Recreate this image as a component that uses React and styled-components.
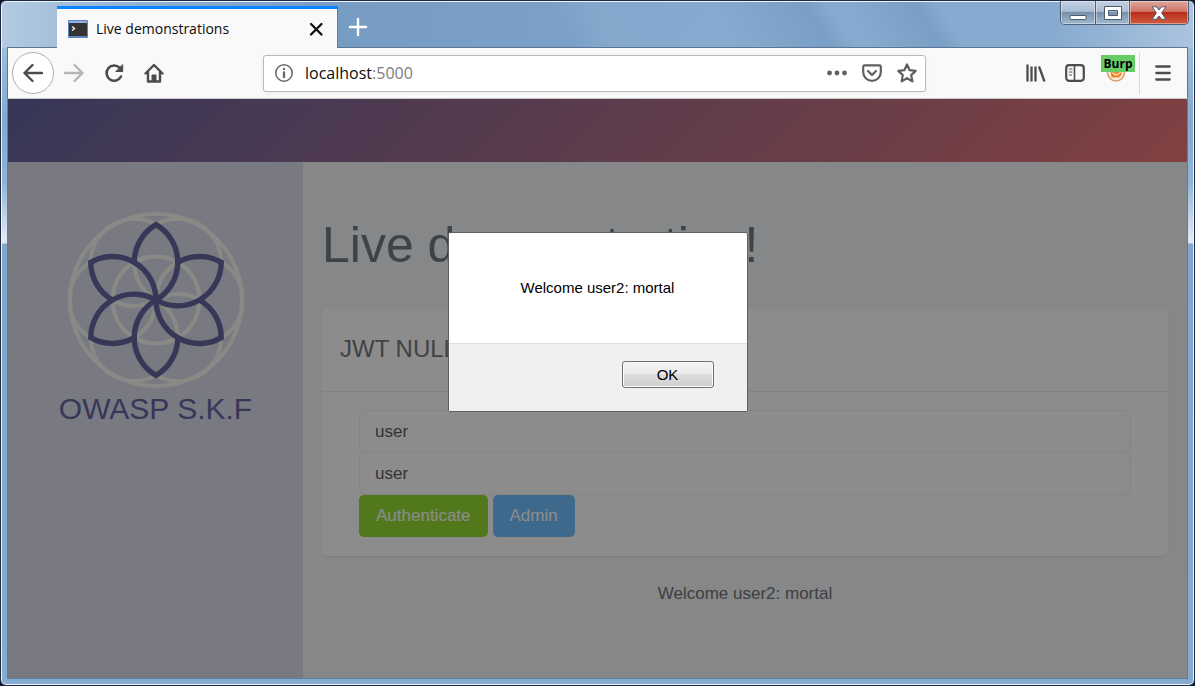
import React from 'react';
import styled, { createGlobalStyle, css } from 'styled-components';

const GlobalStyle = createGlobalStyle`
  *, *::before, *::after { box-sizing: border-box; }
  body { margin: 0; background: #10182b; font-family: "Liberation Sans", Arial, sans-serif; }
  h1, h2, p { margin: 0; font-weight: 400; }
  button, input { font-family: inherit; }
`;

const uiFont = css`font-family: "Open Sans", "Segoe UI", sans-serif;`;

const Window = styled.div`
  display: flex;
  flex-direction: column;
  min-height: 100vh;
  padding: 0 6px 6px;
  border: 1px solid #1d2940;
  border-radius: 6px;
  box-shadow: inset 0 0 0 1px #eef5fc;
  background:
    linear-gradient(58deg, transparent 47%, rgba(255, 255, 255, 0.06) 50%, transparent 60%, rgba(50, 90, 130, 0.14) 68%, transparent 70%, transparent 71%, rgba(50, 90, 130, 0.14) 77%, transparent 79%) 0 0 / 100% 47px no-repeat,
    linear-gradient(90deg, #b4cae2 0, #8fb0d3 12%, #769cc3 28%, #7ba1c8 48%, #86aad0 60%, #86aad0 88%, #abc4de 100%) 0 0 / 100% 47px no-repeat,
    linear-gradient(180deg, #b0c8e1 0, #83a9d0 120px, #8fb3d8 180px, #e0e9f3 238px, #e0e9f3 242px, #80a6cd 243px, #86abd1 100%);
`;

const TitleBar = styled.header`
  display: flex;
  align-items: flex-end;
  height: 46px;
  padding-left: 50px;
`;

const Tab = styled.div`
  display: flex;
  align-items: center;
  width: 281px;
  height: 42px;
  margin-bottom: -1px;
  padding: 0 11px;
  gap: 8px;
  border-top: 3px solid #0a84ff;
  border-right: 1px solid #5f7fa3;
  background: #f9f9fa;
  color: #0c0c0d;
  font-size: 14px;
  z-index: 1;
  ${uiFont}
  span { flex: 1; white-space: nowrap; }
`;

const PlainButton = styled.button`
  display: grid;
  place-items: center;
  flex: none;
  width: ${p => p.$w || 20}px;
  height: ${p => p.$h || 20}px;
  padding: 0;
  border: 0;
  background: none;
  color: ${p => p.$color || '#4c4c4f'};
`;

const WindowControls = styled.div`
  display: flex;
  align-self: flex-start;
  height: 24px;
  margin-left: auto;
  margin-right: -1px;
  border: 1px solid #4e5f78;
  border-top: 0;
  border-radius: 0 0 5px 5px;
  overflow: hidden;
`;

const ControlButton = styled.button`
  display: grid;
  place-items: center;
  width: ${p => (p.$close ? 59 : 34)}px;
  padding: 0;
  border: 0;
  border-left: ${p => (p.$first ? 0 : '1px solid #4e5f78')};
  box-shadow: inset 0 0 0 1px rgba(255, 255, 255, 0.4);
  background: ${p => p.$close
    ? 'linear-gradient(#e0a79f 0, #cf7567 45%, #b8301c 50%, #cf5a3e 100%)'
    : 'linear-gradient(#c3d2e2 0, #a9bdd3 45%, #7890ab 50%, #a0b8d0 100%)'};
`;

const Toolbar = styled.nav`
  display: flex;
  align-items: center;
  height: 52px;
  padding: 0 14px 0 4px;
  border: 1px solid #5b7593;
  border-bottom-color: #c8c8ca;
  background: #f9f9fa;
`;

const BackButton = styled(PlainButton)`
  border: 1px solid #b1b1b3;
  border-radius: 50%;
  background: #fff;
`;

const NavButtons = styled.div`
  display: flex;
  align-items: center;
  gap: 20px;
  margin-left: 10px;
`;

const AddressBar = styled.div`
  display: flex;
  align-items: center;
  flex: 0 1 663px;
  height: 37px;
  margin-left: 99px;
  padding: 0 8px 0 10px;
  gap: 11px;
  border: 1px solid #b9b9bb;
  border-radius: 3px;
  background: #fff;
  box-shadow: 0 1px 4px rgba(0, 0, 0, 0.06);
`;

const Address = styled.span`
  flex: 1;
  color: #7c7c7f;
  font-size: 16px;
  ${uiFont}
  b { color: #0c0c0d; font-weight: 400; }
`;

const AddressActions = styled.div`
  display: flex;
  gap: 15px;
`;

const ToolbarEnd = styled.div`
  display: flex;
  align-items: center;
  gap: 19px;
  margin-left: auto;
`;

const Extension = styled(PlainButton)`
  position: relative;
  margin-left: -2px;
  span {
    position: absolute;
    top: -8px;
    left: -1px;
    width: 34px;
    height: 17px;
    background: #66cc66;
    color: #000;
    font-size: 12px;
    font-weight: 700;
    line-height: 17px;
    text-align: center;
    ${uiFont}
  }
`;

const MenuSlot = styled.div`
  display: flex;
  align-items: center;
  height: 42px;
  margin-left: -10px;
  padding-left: 13px;
  border-left: 1px solid #dadadc;
`;

const Viewport = styled.div`
  position: relative;
  display: flex;
  flex-direction: column;
  flex: 1;
  border: 1px solid #5f7d9d;
  border-top: 0;
  background: #f3f5f6;
`;

const Banner = styled.div`
  height: 63px;
  background: linear-gradient(135deg, #545496 0%, #e86868 100%);
`;

const Columns = styled.div`
  display: flex;
  flex: 1;
`;

const Sidebar = styled.aside`
  display: flex;
  flex-direction: column;
  align-items: center;
  flex: 0 0 295px;
  padding-top: 50px;
  background: #d8d8ea;
  color: #545496;
  font-size: 30px;
  line-height: 42px;
`;

const Main = styled.main`
  flex: 1;
  padding: 48px 19px 0;
  color: #646c70;
`;

const Title = styled.h1`
  font-size: 50px;
  line-height: 70px;
`;

const Card = styled.section`
  margin-top: 29px;
  border-radius: 6px;
  background: #fff;
  box-shadow: 0 1px 1px rgba(0, 0, 0, 0.08);
`;

const CardTitle = styled.h2`
  height: 83px;
  padding: 0 18px;
  border-bottom: 1px solid #e6eaee;
  font-size: 24px;
  line-height: 80px;
`;

const LoginForm = styled.form`
  display: flex;
  flex-direction: column;
  padding: 18px 37px 19px;
`;

const Field = styled.input`
  width: 100%;
  height: 43px;
  padding: 0 15px;
  border: 1px solid #eceeef;
  border-radius: 6px;
  background: #fff;
  color: #4c4c4e;
  font-size: 17px;
  & + & { margin-top: -1px; }
`;

const Actions = styled.div`
  display: flex;
  gap: 5px;
`;

const ActionButton = styled.button`
  height: 42px;
  padding: 0 17px;
  border: 0;
  border-radius: 5px;
  background: ${p => p.$color};
  color: #fff;
  font-size: 17px;
`;

const Result = styled.p`
  margin-top: 26px;
  color: #646468;
  font-size: 17px;
  line-height: 24px;
  text-align: center;
`;

const Backdrop = styled.div`
  position: absolute;
  inset: 0;
  display: flex;
  align-items: flex-start;
  justify-content: center;
  padding-top: 133px;
  background: rgba(26, 26, 26, 0.5);
`;

const Dialog = styled.div`
  width: 300px;
  border: 1px solid #606060;
  border-radius: 2px;
  overflow: hidden;
  background: #fff;
  color: #000;
  font-size: 15px;
`;

const Message = styled.p`
  padding: 45px 0;
  line-height: 20px;
  text-align: center;
`;

const DialogFooter = styled.div`
  display: flex;
  justify-content: flex-end;
  padding: 17px 33px 23px;
  border-top: 1px solid #dfdfdf;
  background: #f0f0f0;
`;

const OkButton = styled.button`
  width: 92px;
  height: 27px;
  padding: 0;
  border: 1px solid #707070;
  border-radius: 3px;
  background: linear-gradient(#f2f2f2 0, #ebebeb 48%, #dddddd 50%, #cfcfcf 100%);
  box-shadow: inset 0 0 0 1px #fafafa;
  color: #000;
  font-size: 15px;
`;

const Stroke = ({ size = 20, width = 2, children, ...rest }) => (
  <svg width={size} height={size} viewBox="0 0 20 20" fill="none" stroke="currentColor"
    strokeWidth={width} strokeLinecap="round" strokeLinejoin="round" aria-hidden="true" {...rest}>
    {children}
  </svg>
);

const R = 43.5;
const H = R * Math.sqrt(3) / 2;
const turns = [0, 60, 120, 180, 240, 300];

const FlowerLogo = () => (
  <svg width="176" height="176" viewBox="-88 -88 176 176" fill="none" aria-hidden="true">
    <g stroke="#f8f8f2" strokeWidth="4">
      <circle r="86" />
      <circle r={R} />
      {turns.map(a => <circle key={a} cx={R / 2} cy={-H} r={R} transform={`rotate(${a})`} />)}
    </g>
    <g stroke="#545496" strokeWidth="5.4" strokeLinejoin="miter">
      {turns.map(a => (
        <path key={a} transform={`rotate(${a})`}
          d={`M${-R / 2} ${-H}A${R} ${R} 0 0 1 0 ${-2 * H}A${R} ${R} 0 0 1 0 0`} />
      ))}
    </g>
  </svg>
);

export default function App() {
  return (
    <>
      <GlobalStyle />
      <Window>
        <TitleBar>
          <Tab>
            <svg width="20" height="18" viewBox="0 0 20 18" aria-hidden="true">
              <rect width="20" height="18" rx="1" fill="#5b84c0" />
              <rect x="1" y="1" width="18" height="2" fill="#8db4e8" />
              <rect x="15" y="1" width="3" height="1" fill="#d98080" />
              <rect x="1" y="3" width="18" height="13" fill="#333" />
              <path d="M4 6.500l2.500 2-2.500 2" stroke="#eee" strokeWidth="1.500" fill="none" />
            </svg>
            <span>Live demonstrations</span>
            <PlainButton aria-label="Close tab" $color="#0c0c0d">
              <Stroke width={2.200}><path d="M5 5l10.500 10.500M15.500 5L5 15.500" /></Stroke>
            </PlainButton>
          </Tab>
          <PlainButton aria-label="New tab" $w={40} $h={41} $color="#fff">
            <Stroke width={2.400}><path d="M10 2v16M2 10h16" /></Stroke>
          </PlainButton>
          <WindowControls>
            <ControlButton $first aria-label="Minimize">
              <svg width="18" height="18" viewBox="0 0 18 18"><rect x="1" y="11.500" width="16" height="4" rx="1" fill="#fff" stroke="#4f5a6b" /></svg>
            </ControlButton>
            <ControlButton aria-label="Maximize">
              <svg width="18" height="14" viewBox="0 0 18 14"><path fillRule="evenodd" d="M.5.500h17v13H.5zM4.500 4.500v5h9v-5z" fill="#fff" stroke="#4f5a6b" /></svg>
            </ControlButton>
            <ControlButton $close aria-label="Close">
              <svg width="16" height="14" viewBox="0 0 16 14"><path d="M1 .8h4.500L8 4 10.500.8H15L10.600 7 15 13.200h-4.500L8 10l-2.500 3.200H1L5.400 7z" fill="#fff" stroke="#4f5a6b" /></svg>
            </ControlButton>
          </WindowControls>
        </TitleBar>
        <Toolbar>
          <BackButton aria-label="Back" $w={42} $h={42}>
            <Stroke width={2.4}><path d="M19 10H1.500M9.500 2l-8 8 8 8" /></Stroke>
          </BackButton>
          <NavButtons>
            <PlainButton aria-label="Forward" $color="#b5b5b7">
              <Stroke width={2.4}><path d="M1 10h17.500M10.500 2l8 8-8 8" /></Stroke>
            </PlainButton>
            <PlainButton aria-label="Reload">
              <Stroke width={2.600}>
                <path d="M17 13.500A7.600 7.600 0 1 1 15.800 5" />
                <path d="M18.700 2v6.500h-6.500z" fill="currentColor" strokeWidth="1" />
              </Stroke>
            </PlainButton>
            <PlainButton aria-label="Home">
              <Stroke width={2.400}>
                <path d="M1.500 10.500L10 2l8.500 8.500M4 9v9.500h12V9" />
                <path d="M8 18v-6h4v6z" fill="currentColor" strokeWidth="1" />
              </Stroke>
            </PlainButton>
          </NavButtons>
          <AddressBar>
            <Stroke width={1.600} color="#6b6b6e">
              <circle cx="10" cy="10" r="8.200" /><path d="M10 9.500v4.500M10 6v.1" strokeWidth="2.400" />
            </Stroke>
            <Address><b>localhost</b>:5000</Address>
            <AddressActions>
              <PlainButton aria-label="Page actions" $color="#5f5f62">
                <svg width="20" height="20" viewBox="0 0 20 20" fill="currentColor"><circle cx="2.500" cy="10" r="2.400" /><circle cx="10" cy="10" r="2.400" /><circle cx="17.500" cy="10" r="2.400" /></svg>
              </PlainButton>
              <PlainButton aria-label="Save to Pocket" $color="#5f5f62">
                <Stroke width={2.200}><path d="M2.500 2.300h15a1.300 1.300 0 0 1 1.300 1.300V9a8.800 8.800 0 0 1-17.600 0V3.600a1.300 1.300 0 0 1 1.300-1.300zM6 8l4 4 4-4" /></Stroke>
              </PlainButton>
              <PlainButton aria-label="Bookmark" $color="#5f5f62">
                <Stroke width={2.200}><path d="M10 1.500l2.600 5.700 6.100.7-4.500 4.200 1.200 6.200L10 15.200l-5.400 3.100 1.200-6.200L1.300 7.900l6.100-.7z" /></Stroke>
              </PlainButton>
            </AddressActions>
          </AddressBar>
          <ToolbarEnd>
            <PlainButton aria-label="Library">
              <Stroke width={2.300} strokeLinecap="butt"><path d="M1.500 1.500v17M5.500 3.500v15M9.500 3.500v15M13 3.500l5.500 15" /></Stroke>
            </PlainButton>
            <PlainButton aria-label="Sidebars">
              <Stroke width={2.200}><rect x="1.200" y="2.200" width="17.600" height="15.600" rx="3" /><path d="M9.500 2v16" strokeWidth="1.600" /><path d="M4.500 6h2.500M4.500 9h2.500M4.500 12h2" strokeWidth="1.200" /></Stroke>
            </PlainButton>
            <Extension aria-label="Burp" $w={28}>
              <svg width="20" height="20" viewBox="0 0 20 20"><circle cx="10" cy="9.500" r="8.500" fill="#f7ede2" stroke="#d9a066" strokeWidth="1.500" /><path d="M4.500 8h11v4l-2.500 2.500H5.500z" fill="#f08a24" /><path d="M6.500 10l4 2 4-2.500" stroke="#fff" fill="none" /></svg>
              <span>Burp</span>
            </Extension>
            <MenuSlot>
              <PlainButton aria-label="Open menu">
                <Stroke width={2.300}><path d="M3.300 3.500h13.400M3.300 10h13.400M3.300 16.500h13.400" /></Stroke>
              </PlainButton>
            </MenuSlot>
          </ToolbarEnd>
        </Toolbar>
        <Viewport>
          <Banner />
          <Columns>
            <Sidebar>
              <FlowerLogo />
              <span>OWASP S.K.F</span>
            </Sidebar>
            <Main>
              <Title>Live demonstration!</Title>
              <Card>
                <CardTitle>JWT NULL</CardTitle>
                <LoginForm onSubmit={e => e.preventDefault()}>
                  <Field aria-label="Username" defaultValue="user" />
                  <Field aria-label="Password" defaultValue="user" />
                  <Actions>
                    <ActionButton type="submit" $color="#88d81e">Authenticate</ActionButton>
                    <ActionButton type="button" $color="#60b8ff">Admin</ActionButton>
                  </Actions>
                </LoginForm>
              </Card>
              <Result>Welcome user2: mortal</Result>
            </Main>
          </Columns>
          <Backdrop>
            <Dialog role="alertdialog" aria-modal="true" aria-label="Message">
              <Message>Welcome user2: mortal</Message>
              <DialogFooter>
                <OkButton>OK</OkButton>
              </DialogFooter>
            </Dialog>
          </Backdrop>
        </Viewport>
      </Window>
    </>
  );
}
